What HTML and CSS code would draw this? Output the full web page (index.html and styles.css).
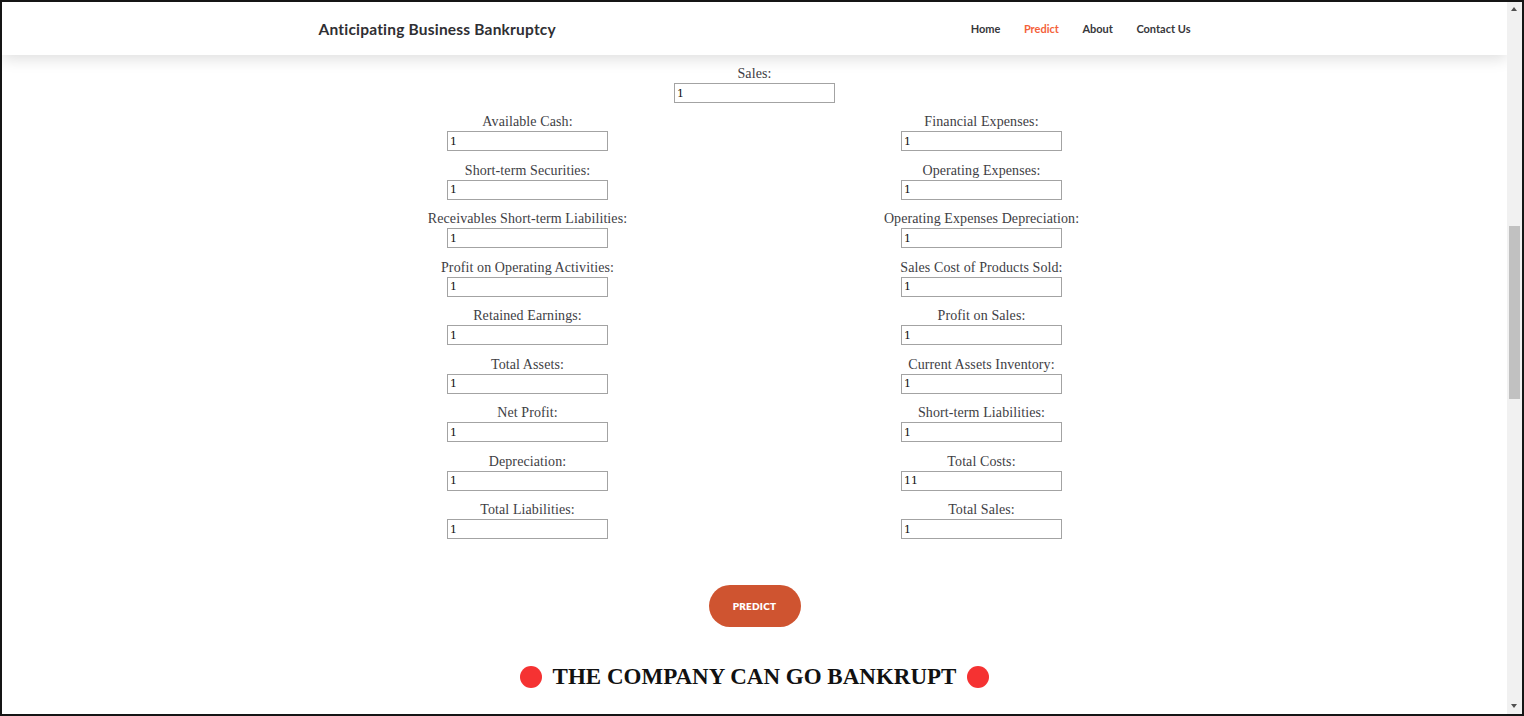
FILE: index.html
```html
<!DOCTYPE html>
<html lang="en">
<head>
<meta charset="utf-8">
<title>Anticipating Business Bankruptcy</title>
<link rel="stylesheet" href="styles.css">
</head>
<body>
<div class="frame">
  <div class="viewport">
    <header class="topbar">
      <div class="topbar-inner">
        <div class="brand">Anticipating Business Bankruptcy</div>
        <nav class="nav">
          <a class="nav-link">Home</a>
          <a class="nav-link active">Predict</a>
          <a class="nav-link">About</a>
          <a class="nav-link">Contact Us</a>
        </nav>
      </div>
    </header>
    <main class="content">
      <form class="form">
        <div class="field single">
          <label class="label">Sales:</label>
          <input class="input" type="text" value="1">
        </div>
        <div class="grid">
          <div class="field"><label class="label">Available Cash:</label><input class="input" type="text" value="1"></div>
          <div class="field"><label class="label">Financial Expenses:</label><input class="input" type="text" value="1"></div>
          <div class="field"><label class="label">Short-term Securities:</label><input class="input" type="text" value="1"></div>
          <div class="field"><label class="label">Operating Expenses:</label><input class="input" type="text" value="1"></div>
          <div class="field"><label class="label">Receivables Short-term Liabilities:</label><input class="input" type="text" value="1"></div>
          <div class="field"><label class="label">Operating Expenses Depreciation:</label><input class="input" type="text" value="1"></div>
          <div class="field"><label class="label">Profit on Operating Activities:</label><input class="input" type="text" value="1"></div>
          <div class="field"><label class="label">Sales Cost of Products Sold:</label><input class="input" type="text" value="1"></div>
          <div class="field"><label class="label">Retained Earnings:</label><input class="input" type="text" value="1"></div>
          <div class="field"><label class="label">Profit on Sales:</label><input class="input" type="text" value="1"></div>
          <div class="field"><label class="label">Total Assets:</label><input class="input" type="text" value="1"></div>
          <div class="field"><label class="label">Current Assets Inventory:</label><input class="input" type="text" value="1"></div>
          <div class="field"><label class="label">Net Profit:</label><input class="input" type="text" value="1"></div>
          <div class="field"><label class="label">Short-term Liabilities:</label><input class="input" type="text" value="1"></div>
          <div class="field"><label class="label">Depreciation:</label><input class="input" type="text" value="1"></div>
          <div class="field"><label class="label">Total Costs:</label><input class="input" type="text" value="11"></div>
          <div class="field"><label class="label">Total Liabilities:</label><input class="input" type="text" value="1"></div>
          <div class="field"><label class="label">Total Sales:</label><input class="input" type="text" value="1"></div>
        </div>
        <div class="actions">
          <button class="btn" type="button">PREDICT</button>
        </div>
      </form>
      <h2 class="result"><span class="dot"></span><span class="result-text">THE COMPANY CAN GO BANKRUPT</span><span class="dot"></span></h2>
    </main>
  </div>
  <div class="scrollbar">
    <div class="arrow up"></div>
    <div class="track"><div class="thumb"></div></div>
    <div class="arrow down"></div>
  </div>
</div>
</body>
</html>
```

FILE: styles.css
```css
* { box-sizing: border-box; }
html, body { margin: 0; padding: 0; }
body { background: #fff; overflow: hidden; }

.frame {
  width: 1524px;
  height: 716px;
  border: 2px solid #151515;
  display: flex;
  background: #fff;
}

.viewport {
  flex: 1;
  position: relative;
  overflow: hidden;
  display: flex;
  flex-direction: column;
}

.topbar {
  height: 53px;
  background: #fff;
  box-shadow: 0 4px 14px rgba(0, 0, 0, 0.13);
  position: relative;
  z-index: 2;
  flex: none;
}
.topbar-inner {
  width: 872px;
  margin: 0 auto;
  height: 100%;
  display: flex;
  align-items: center;
  justify-content: space-between;
  padding-top: 0;
}
.brand {
  font-family: Lato, "Open Sans", sans-serif;
  font-weight: 700;
  font-size: 15.5px;
  color: #2f2f33;
  letter-spacing: 0.2px;
}
.nav { display: flex; gap: 23.5px; }
.nav-link {
  font-family: Lato, "Open Sans", sans-serif;
  font-weight: 700;
  font-size: 11px;
  color: #37373b;
}
.nav-link.active { color: #f4623a; }

.content {
  flex: 1;
  display: flex;
  flex-direction: column;
  align-items: center;
  padding-top: 10px;
}

.form { display: flex; flex-direction: column; align-items: center; }

.field {
  width: 300px;
  display: flex;
  flex-direction: column;
  align-items: center;
}
.label {
  font-family: "Liberation Serif", "Times New Roman", serif;
  font-size: 14px;
  line-height: 18px;
  color: #3e3e44;
  letter-spacing: 0.1px;
  height: 18px;
}
.input {
  width: 161px;
  height: 20px;
  border: 1px solid #a3a3a3;
  font-family: "DejaVu Serif", serif;
  font-size: 11px;
  font-weight: 400;
  color: #111;
  padding: 0 2px;
  outline: none;
  background: #fff;
}

.single { margin-bottom: 10px; }

.grid {
  display: grid;
  grid-template-columns: 300px 300px;
  column-gap: 154px;
  row-gap: 10.5px;
}

.actions { margin-top: 46px; }
.btn {
  width: 92px;
  height: 42px;
  border: none;
  border-radius: 21px;
  background: #cf5430;
  color: #fff;
  font-family: Lato, "Open Sans", sans-serif;
  font-weight: 800;
  font-size: 10px;
  letter-spacing: 0.2px;
}

.result {
  margin: 37px 0 0;
  display: flex;
  align-items: center;
  gap: 11px;
  font-family: "Liberation Serif", "Times New Roman", serif;
  font-weight: 700;
  font-size: 23px;
  color: #111;
}
.dot {
  width: 22px;
  height: 22px;
  border-radius: 50%;
  background: #f53232;
  display: block;
}

.scrollbar {
  width: 15px;
  background: #f1f1f1;
  display: flex;
  flex-direction: column;
  position: relative;
}
.arrow { height: 15px; position: relative; }
.arrow::after {
  content: "";
  position: absolute;
  left: 4px;
  width: 0;
  height: 0;
  border-left: 3.5px solid transparent;
  border-right: 3.5px solid transparent;
}
.arrow.up::after { top: 5px; border-bottom: 4px solid #505050; }
.arrow.down::after { top: 5px; border-top: 4px solid #505050; }
.track { flex: 1; position: relative; }
.thumb {
  position: absolute;
  left: 2px;
  right: 2px;
  top: 209px;
  height: 173px;
  background: #c1c1c1;
}
```
